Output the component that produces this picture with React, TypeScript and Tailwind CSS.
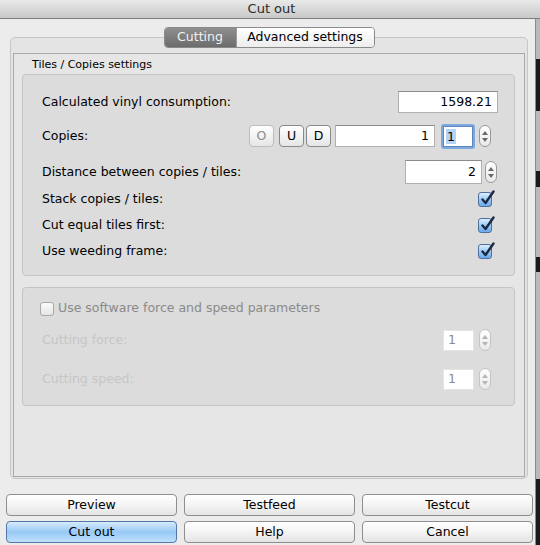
import React from 'react';

const font = { fontFamily: '"DejaVu Sans", "Liberation Sans", sans-serif' };

function Stepper({ disabled }: { disabled?: boolean }) {
  const c = disabled ? '#b5b5b5' : '#6a6a6a';
  return (
    <div
      className={`w-[12px] h-[22px] rounded-[6px] border flex flex-col items-center justify-center gap-[3px] bg-gradient-to-b from-white to-[#e9e9e9] ${
        disabled ? 'border-[#c4c4c4]' : 'border-[#9a9a9a]'
      }`}
    >
      <svg width="6" height="4" viewBox="0 0 6 4">
        <path d="M3 0 L6 4 L0 4 Z" fill={c} />
      </svg>
      <svg width="6" height="4" viewBox="0 0 6 4">
        <path d="M0 0 L6 0 L3 4 Z" fill={c} />
      </svg>
    </div>
  );
}

function Check() {
  return (
    <div className="relative w-[14px] h-[15px] rounded-[3px] border border-[#50709c] bg-gradient-to-b from-[#dcefff] via-[#9ccbf6] to-[#6aa9ea]">
      <svg className="absolute left-[1px] top-[-3px]" width="15" height="16" viewBox="0 0 15 16">
        <path d="M2.5 9.5 L5.5 13 L13.5 1.5" stroke="#1b2a44" strokeWidth="2.4" fill="none" strokeLinecap="round" strokeLinejoin="round" />
      </svg>
    </div>
  );
}

function Field({ value, w, h = 22, align = 'right' }: { value: string; w: number; h?: number; align?: string }) {
  return (
    <div
      className={`bg-white border border-[#b0b0b0] border-t-[#8c8c8c] flex items-center px-[5px] text-black ${
        align === 'right' ? 'justify-end' : 'justify-start'
      }`}
      style={{ width: w, height: h }}
    >
      {value}
    </div>
  );
}

function SmallBtn({ label, disabled }: { label: string; disabled?: boolean }) {
  return (
    <div
      className={`w-[25px] h-[22px] rounded-[4px] border flex items-center justify-center bg-gradient-to-b from-white to-[#e6e6e6] ${
        disabled ? 'border-[#bdbdbd] text-[#8c8c8c]' : 'border-[#8a8a8a] text-black'
      }`}
    >
      {label}
    </div>
  );
}

function Row({ label, children, className }: { label: string; children: React.ReactNode; className: string }) {
  return (
    <div className={`flex items-center justify-between pl-[19px] ${className}`}>
      <span className="text-black">{label}</span>
      <div className="flex items-center">{children}</div>
    </div>
  );
}

function Btn({ label, primary }: { label: string; primary?: boolean }) {
  return (
    <div
      className={`w-[171px] h-[22px] rounded-[4px] border flex items-center justify-center text-black ${
        primary
          ? 'border-[#5577a8] bg-gradient-to-b from-[#d6ebfd] via-[#98c9f6] to-[#bfe0fd]'
          : 'border-[#8e8e8e] bg-gradient-to-b from-white via-[#f4f4f4] to-[#e4e4e4]'
      }`}
    >
      {label}
    </div>
  );
}

export default function App() {
  return (
    <div className="w-[540px] h-[545px] flex flex-col bg-[#ececec] text-[12.5px] overflow-hidden" style={font}>
      <div className="h-[19px] flex items-center justify-center bg-gradient-to-b from-[#e9e9e9] to-[#c9c9c9] border-b border-[#7e7e7e] text-[13px] text-[#2a2a2a]">
        <span className="-mr-[3px]">Cut out</span>
      </div>
      <div className="flex flex-1">
        <div className="w-[535px] flex flex-col bg-[#ececec]">
          {/* tabs */}
          <div className="relative z-10 flex justify-center mt-[8px] h-[21px] pl-[3px]">
            <div className="flex rounded-[4px] border border-[#8a8a8a] overflow-hidden">
              <div className="w-[71px] flex items-center justify-center bg-gradient-to-b from-[#8f8f8f] to-[#6c6c6c] text-[#f2f2f2]">
                Cutting
              </div>
              <div className="w-[138px] flex items-center justify-center bg-gradient-to-b from-white to-[#ededed] border-l border-[#9a9a9a] text-black">
                Advanced settings
              </div>
            </div>
          </div>
          {/* tab box */}
          <div className="ml-[10px] w-[518px] h-[442px] -mt-[11px] rounded-[5px] border border-[#c6c6c6] bg-[#e4e4e4] pt-[15px] px-[2px] pb-[1px] flex">
            <div className="flex-1 border border-[#a9a9a9] bg-[#e6e6e6] flex flex-col">
              <div className="h-[20px] pl-[18px] pt-[5px] text-[11px] leading-[12px] text-black">Tiles / Copies settings</div>
              <div className="ml-[8px] mr-[9px] h-[202px] rounded-[4px] border border-[#c4c4c4] bg-[#dcdcdc] flex flex-col pt-[14px]">
                <Row label="Calculated vinyl consumption:" className="h-[26px] pr-[16px]">
                  <Field value="1598.21" w={100} />
                </Row>
                <Row label="Copies:" className="h-[26px] mt-[8px] pr-[23px]">
                  <SmallBtn label="O" disabled />
                  <div className="w-[5px]" />
                  <SmallBtn label="U" />
                  <div className="w-[2px]" />
                  <SmallBtn label="D" />
                  <div className="w-[4px]" />
                  <Field value="1" w={100} />
                  <div className="w-[6px]" />
                  <div className="w-[34px] h-[25px] rounded-[3px] bg-[#7ea9de] p-[2px]">
                    <div className="w-full h-full bg-white border border-[#5d86bd] flex items-center pl-[2px]">
                      <span className="bg-[#b5d3f7] px-[1px] leading-[15px]">1</span>
                    </div>
                  </div>
                  <div className="w-[4px]" />
                  <Stepper />
                </Row>
                <Row label="Distance between copies / tiles:" className="h-[26px] mt-[10px] pr-[17px]">
                  <Field value="2" w={77} h={24} />
                  <div className="w-[3px]" />
                  <Stepper />
                </Row>
                <Row label="Stack copies / tiles:" className="h-[17px] mt-[6px] pr-[22px]">
                  <Check />
                </Row>
                <Row label="Cut equal tiles first:" className="h-[17px] mt-[9px] pr-[22px]">
                  <Check />
                </Row>
                <Row label="Use weeding frame:" className="h-[17px] mt-[9px] pr-[22px]">
                  <Check />
                </Row>
              </div>
              <div className="mt-[11px] ml-[8px] mr-[9px] h-[119px] rounded-[4px] border border-[#c4c4c4] bg-[#dcdcdc] flex flex-col pt-[13px]">
                <div className="flex items-center h-[15px] pl-[17px] gap-[4px] text-[#8a8a8a]">
                  <div className="w-[14px] h-[14px] rounded-[3px] border border-[#a8a8a8] bg-gradient-to-b from-[#fafafa] to-[#e6e6e6]" />
                  <span>Use software force and speed parameters</span>
                </div>
                <div className="flex items-center justify-between pl-[19px] pr-[23px] h-[22px] mt-[13px] text-[#c6c6c6]">
                  <span>Cutting force:</span>
                  <div className="flex items-center gap-[5px]">
                    <div className="w-[31px] h-[21px] bg-white border border-[#e4e4e4] flex items-center pl-[4px] text-[#8a8a8a]">1</div>
                    <Stepper disabled />
                  </div>
                </div>
                <div className="flex items-center justify-between pl-[19px] pr-[23px] h-[22px] mt-[17px] text-[#c6c6c6]">
                  <span>Cutting speed:</span>
                  <div className="flex items-center gap-[5px]">
                    <div className="w-[31px] h-[21px] bg-white border border-[#e4e4e4] flex items-center pl-[4px] text-[#8a8a8a]">1</div>
                    <Stepper disabled />
                  </div>
                </div>
              </div>
            </div>
          </div>
          {/* buttons */}
          <div className="grid grid-cols-[171px_171px_171px] gap-x-[7px] gap-y-[5px] ml-[6px] mt-[15px]">
            <Btn label="Preview" />
            <Btn label="Testfeed" />
            <Btn label="Testcut" />
            <Btn label="Cut out" primary />
            <Btn label="Help" />
            <Btn label="Cancel" />
          </div>
        </div>
        <div className="w-[5px] flex flex-col border-l border-[#8a8a8a] bg-[#b9b9b9]">
          <div className="h-[40px]" />
          <div className="h-[52px] bg-[#1a1a1a]" />
          <div className="h-[60px]" />
          <div className="h-[16px] bg-[#1a1a1a]" />
          <div className="h-[70px]" />
          <div className="h-[15px] bg-[#1a1a1a]" />
          <div className="flex-1" />
          <div className="h-[66px] bg-[#1a1a1a]" />
        </div>
      </div>
    </div>
  );
}
